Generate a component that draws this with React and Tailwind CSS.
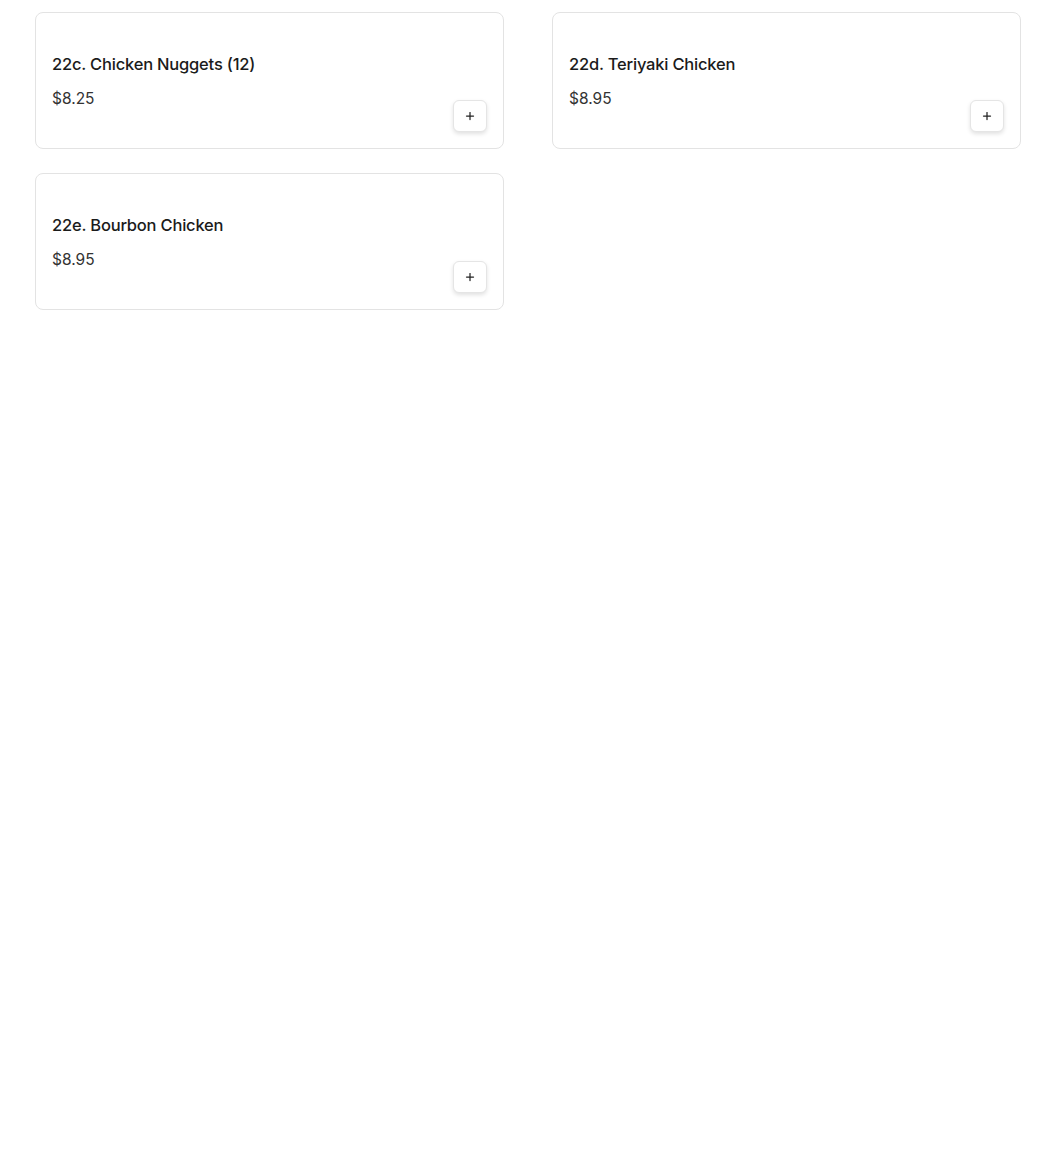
import { Plus } from 'lucide-react'

const ITEMS = [
    { id: '22c', name: '22c. Chicken Nuggets (12)', price: '$8.25' },
    { id: '22d', name: '22d. Teriyaki Chicken', price: '$8.95' },
    { id: '22e', name: '22e. Bourbon Chicken', price: '$8.95' },
]

export default function App() {
    return (
        <div className="w-full min-h-screen bg-white font-['Inter',sans-serif]">
            <div className="grid grid-cols-2 gap-x-12 gap-y-6 pl-[35px] pr-[29px] pt-3">
                {ITEMS.map(item => (
                    <div
                        key={item.id}
                        className="border border-[#e3e3e3] rounded-lg bg-white pt-[39px] pb-4 pl-4 pr-4"
                    >
                        <h3 className="text-[16.5px] leading-6 font-medium text-[#1b1b1b] tracking-[-0.2px]">
                            {item.name}
                        </h3>
                        <div className="flex justify-between mt-[11px]">
                            <p className="text-[15.5px] leading-6 text-[#333333] self-start">{item.price}</p>
                            <button className="mt-[13px] w-[34px] h-8 flex items-center justify-center rounded-md border border-[#e5e5e5] bg-white shadow-[0_2px_4px_rgba(0,0,0,0.12)] text-[#222]">
                                <Plus size={12} strokeWidth={2.5} />
                            </button>
                        </div>
                    </div>
                ))}
            </div>
        </div>
    )
}
